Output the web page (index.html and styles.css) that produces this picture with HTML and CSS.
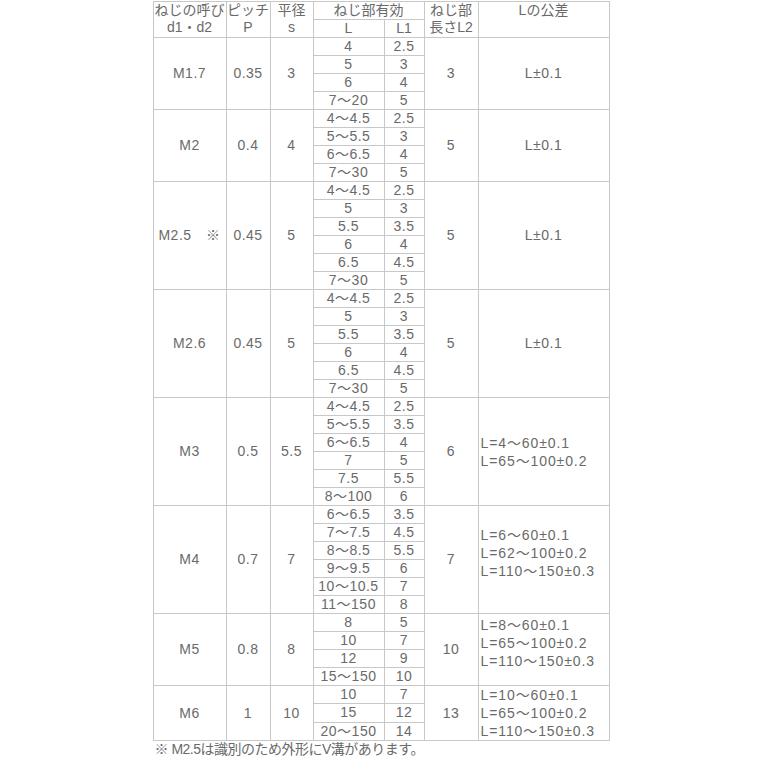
FILE: index.html
```html
<!DOCTYPE html>
<html lang="ja">
<head>
<meta charset="utf-8">
<link rel="stylesheet" href="styles.css">
</head>
<body>
<div class="wrap">
<table class="spec">
<colgroup>
<col class="c1"><col class="c2"><col class="c3"><col class="c4"><col class="c5"><col class="c6"><col class="c7">
</colgroup>
<thead>
<tr>
<th rowspan="2" class="two">ねじの呼び<br>d1・d2</th>
<th rowspan="2" class="two">ピッチ<br>P</th>
<th rowspan="2" class="two">平径<br>s</th>
<th colspan="2">ねじ部有効</th>
<th rowspan="2" class="two">ねじ部<br>長さL2</th>
<th rowspan="2" class="two top">Lの公差</th>
</tr>
<tr><th>L</th><th>L1</th></tr>
</thead>
<tbody>
<tr><td rowspan="4">M1.7</td><td rowspan="4">0.35</td><td rowspan="4">3</td><td>4</td><td>2.5</td><td rowspan="4">3</td><td rowspan="4">L±0.1</td></tr>
<tr><td>5</td><td>3</td></tr>
<tr><td>6</td><td>4</td></tr>
<tr><td>7～20</td><td>5</td></tr>

<tr><td rowspan="4">M2</td><td rowspan="4">0.4</td><td rowspan="4">4</td><td>4～4.5</td><td>2.5</td><td rowspan="4">5</td><td rowspan="4">L±0.1</td></tr>
<tr><td>5～5.5</td><td>3</td></tr>
<tr><td>6～6.5</td><td>4</td></tr>
<tr><td>7～30</td><td>5</td></tr>

<tr><td rowspan="6">M2.5　※</td><td rowspan="6">0.45</td><td rowspan="6">5</td><td>4～4.5</td><td>2.5</td><td rowspan="6">5</td><td rowspan="6">L±0.1</td></tr>
<tr><td>5</td><td>3</td></tr>
<tr><td>5.5</td><td>3.5</td></tr>
<tr><td>6</td><td>4</td></tr>
<tr><td>6.5</td><td>4.5</td></tr>
<tr><td>7～30</td><td>5</td></tr>

<tr><td rowspan="6">M2.6</td><td rowspan="6">0.45</td><td rowspan="6">5</td><td>4～4.5</td><td>2.5</td><td rowspan="6">5</td><td rowspan="6">L±0.1</td></tr>
<tr><td>5</td><td>3</td></tr>
<tr><td>5.5</td><td>3.5</td></tr>
<tr><td>6</td><td>4</td></tr>
<tr><td>6.5</td><td>4.5</td></tr>
<tr><td>7～30</td><td>5</td></tr>

<tr><td rowspan="6">M3</td><td rowspan="6">0.5</td><td rowspan="6">5.5</td><td>4～4.5</td><td>2.5</td><td rowspan="6">6</td><td rowspan="6" class="tol">L=4～60±0.1<br>L=65～100±0.2</td></tr>
<tr><td>5～5.5</td><td>3.5</td></tr>
<tr><td>6～6.5</td><td>4</td></tr>
<tr><td>7</td><td>5</td></tr>
<tr><td>7.5</td><td>5.5</td></tr>
<tr><td>8～100</td><td>6</td></tr>

<tr><td rowspan="6">M4</td><td rowspan="6">0.7</td><td rowspan="6">7</td><td>6～6.5</td><td>3.5</td><td rowspan="6">7</td><td rowspan="6" class="tol lift">L=6～60±0.1<br>L=62～100±0.2<br>L=110～150±0.3</td></tr>
<tr><td>7～7.5</td><td>4.5</td></tr>
<tr><td>8～8.5</td><td>5.5</td></tr>
<tr><td>9～9.5</td><td>6</td></tr>
<tr><td>10～10.5</td><td>7</td></tr>
<tr><td>11～150</td><td>8</td></tr>

<tr><td rowspan="4">M5</td><td rowspan="4">0.8</td><td rowspan="4">8</td><td>8</td><td>5</td><td rowspan="4">10</td><td rowspan="4" class="tol lift">L=8～60±0.1<br>L=65～100±0.2<br>L=110～150±0.3</td></tr>
<tr><td>10</td><td>7</td></tr>
<tr><td>12</td><td>9</td></tr>
<tr><td>15～150</td><td>10</td></tr>

<tr><td rowspan="3">M6</td><td rowspan="3">1</td><td rowspan="3">10</td><td>10</td><td>7</td><td rowspan="3">13</td><td rowspan="3" class="tol">L=10～60±0.1<br>L=65～100±0.2<br>L=110～150±0.3</td></tr>
<tr><td>15</td><td>12</td></tr>
<tr><td>20～150</td><td>14</td></tr>
</tbody>
</table>
<p class="note">※ M2.5は識別のため外形にV溝があります。</p>
</div>
</body>
</html>
```

FILE: styles.css
```css
html, body {
  margin: 0;
  padding: 0;
  background: #ffffff;
}
body {
  font-family: "Liberation Sans", "Noto Sans CJK JP", sans-serif;
  font-size: 14px;
  color: #6a6a6a;
}
.wrap {
  width: 456px;
  margin: 1px auto 0;
}
.spec {
  border-collapse: collapse;
  table-layout: fixed;
  width: 456px;
}
.c1 { width: 73px; }
.c2 { width: 44px; }
.c3 { width: 43px; }
.c4 { width: 71px; }
.c5 { width: 40px; }
.c6 { width: 54px; }
.c7 { width: 131px; }
.spec th,
.spec td {
  border: 1px solid #c8c8c8;
  padding: 0;
  height: 17px;
  line-height: 17px;
  text-align: center;
  vertical-align: middle;
  font-weight: normal;
  white-space: nowrap;
  overflow: hidden;
}
.spec td {
  letter-spacing: 0.5px;
}
.spec th.two {
  vertical-align: top;
}
.spec th.top {
  vertical-align: top;
}
.spec td.tol {
  text-align: left;
  padding-left: 2px;
  line-height: 18px;
  letter-spacing: 0.9px;
}
.spec td.lift {
  padding-bottom: 14px;
}
.note {
  margin: 0 0 0 2px;
  line-height: 17px;
  font-size: 14px;
  letter-spacing: -0.5px;
}
```
